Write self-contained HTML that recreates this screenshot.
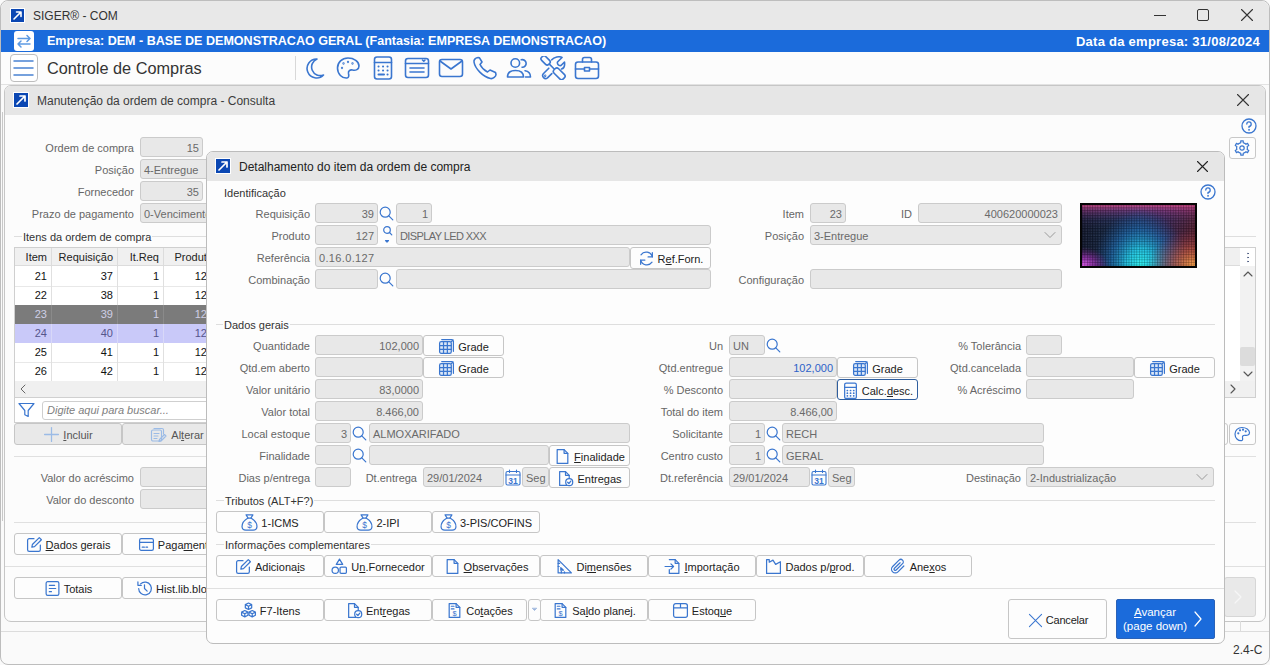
<!DOCTYPE html><html><head><meta charset="utf-8"><style>
*{box-sizing:border-box;margin:0;padding:0}
html,body{width:1270px;height:665px;overflow:hidden;background:#fafafa;font-family:"Liberation Sans",sans-serif}
body>div,body>svg{position:absolute}
.t{position:absolute;white-space:nowrap;font-size:11px;color:#333}
.lb{position:absolute;width:200px;height:20px;line-height:22px;text-align:right;font-size:11px;color:#666;white-space:nowrap}
.in{position:absolute;background:#e8e8e8;border:1px solid #cbcbcb;border-radius:3px;font-size:11px;color:#6a6a6a;white-space:nowrap;overflow:hidden}
.bt{position:absolute;background:#fdfdfd;border:1px solid #c6c6c6;border-radius:3px;font-size:11px;color:#222}
.bc{position:absolute;left:0;top:0;right:0;bottom:0;display:flex;align-items:center;justify-content:center;white-space:nowrap;padding-top:1px}
.gt{position:absolute;background:#fcfcfc;padding:0 1px;height:16px;line-height:16px;font-size:11px;color:#333;white-space:nowrap}
u{text-decoration:underline;text-underline-offset:1px}
</style></head><body>
<div style="left:0px;top:0px;width:1270px;height:665px;background:#fafafa;border:1px solid #bdbdbd;border-radius:8px"></div>
<div style="left:1px;top:1px;width:1268px;height:29px;background:#e8e8e8;border-radius:8px 8px 0 0"></div>
<div style="left:10px;top:8px;width:15px;height:15px;background:#fff"></div>
<div style="left:11px;top:9px;width:13px;height:13px;background:#0b47b3"></div>
<svg style="left:11px;top:9px;" width="13" height="13" viewBox="0 0 13 13" fill="none" stroke="#fff" stroke-width="1.6" stroke-linecap="round" stroke-linejoin="round"><path d="M3 10 L10 3 M5.5 3 H10 V7.5"/></svg>
<div class="t" style="left:33px;top:6px;height:20px;line-height:20px;text-align:left;font-size:12px;color:#333">SIGER® - COM</div>
<div style="left:1154px;top:15px;width:12px;height:1px;background:#333"></div>
<div style="left:1197px;top:9px;width:12px;height:12px;border:1px solid #333;border-radius:2px"></div>
<svg style="left:1241px;top:9px;" width="12" height="12" viewBox="0 0 12 12" fill="none" stroke="#333" stroke-width="1.1" stroke-linecap="round" stroke-linejoin="round"><path d="M0.5 0.5 L11.5 11.5 M11.5 0.5 L0.5 11.5"/></svg>
<div style="left:1px;top:30px;width:1268px;height:22px;background:#1b6bdb"></div>
<div style="left:14px;top:31px;width:20px;height:20px;background:#fff;border-radius:3px"></div>
<svg style="left:14px;top:31px;" width="20" height="20" viewBox="0 0 20 20" fill="none" stroke="#5d9ae3" stroke-width="1.5" stroke-linecap="round" stroke-linejoin="round"><path d="M4 7.5 H16 M13 4.5 L16 7.5 L13 10.5 M16 13 H4 M7 10 L4 13 L7 16"/></svg>
<div class="t" style="left:47px;top:30px;height:22px;line-height:22px;text-align:left;font-size:12.55px;font-weight:bold;color:#fff">Empresa: DEM - BASE DE DEMONSTRACAO GERAL (Fantasia: EMPRESA DEMONSTRACAO)</div>
<div class="t" style="left:1060px;top:30px;width:200px;height:23px;line-height:23px;text-align:right;font-size:13px;font-weight:bold;color:#fff;letter-spacing:.26px">Data da empresa: 31/08/2024</div>
<div style="left:1px;top:52px;width:1268px;height:32px;background:#fcfcfc"></div>
<div style="left:1px;top:84px;width:1268px;height:1px;background:#e2e2e2"></div>
<div style="left:10px;top:54px;width:28px;height:28px;border:1px solid #bdbdbd;border-radius:4px;background:#fff"></div>
<svg style="left:10px;top:54px;" width="28" height="28" viewBox="0 0 28 28" fill="none" stroke="#4a82d2" stroke-width="1.5" stroke-linecap="round" stroke-linejoin="round"><path d="M4 7 H23 M4 14 H23 M4 21 H23"/></svg>
<div class="t" style="left:47px;top:55px;height:26px;line-height:26px;text-align:left;font-size:16.3px;color:#333">Controle de Compras</div>
<div style="left:295px;top:56px;width:1px;height:24px;background:#d8d8d8"></div>
<svg style="left:304px;top:57px;" width="21" height="22" viewBox="0 0 21 22" fill="none" stroke="#3a76cf" stroke-width="1.6" stroke-linecap="round" stroke-linejoin="round"><path d="M13 2 A9.5 9.5 0 1 0 19.5 18 A8.5 8.5 0 0 1 13 2 Z"/></svg>
<svg style="left:336px;top:56px;" width="25" height="24" viewBox="0 0 25 24" fill="none" stroke="#3a76cf" stroke-width="1.6" stroke-linecap="round" stroke-linejoin="round"><path d="M12 2 C6 2 1.5 6.5 1.5 12 C1.5 18 6 22.5 11 22 C13 21.8 13 19.5 12.5 17.5 C12 15 14 13.5 16.5 14 C19.5 14.8 23 13.5 23 10 C23 5.5 18 2 12 2 Z"/><circle cx="6" cy="12" r=".35" fill="#3a76cf"/><circle cx="7.5" cy="7.5" r=".35" fill="#3a76cf"/><circle cx="12" cy="6" r=".35" fill="#3a76cf"/><circle cx="16.5" cy="7.5" r=".35" fill="#3a76cf"/></svg>
<svg style="left:373px;top:56px;" width="20" height="24" viewBox="0 0 20 24" fill="none" stroke="#3a76cf" stroke-width="1.6" stroke-linecap="round" stroke-linejoin="round"><rect x="1.5" y="1" width="17" height="22" rx="2.5"/><path d="M1.5 6.5 H18.5"/><path d="M5.5 10.5h.1M10 10.5h.1M14.5 10.5h.1M5.5 14.5h.1M10 14.5h.1M14.5 14.5h.1M5.5 18.5H11M14.5 18.5h.1" stroke-width="2"/></svg>
<svg style="left:404px;top:57px;" width="26" height="22" viewBox="0 0 26 22" fill="none" stroke="#3a76cf" stroke-width="1.6" stroke-linecap="round" stroke-linejoin="round"><rect x="1.5" y="1.5" width="23" height="19" rx="2.5"/><path d="M1.5 6.5 H24.5 M6 11 H20 M6 15 H20 M18.5 3 L19.8 4.2 L21 3"/></svg>
<svg style="left:438px;top:58px;" width="26" height="20" viewBox="0 0 26 20" fill="none" stroke="#3a76cf" stroke-width="1.6" stroke-linecap="round" stroke-linejoin="round"><rect x="1.5" y="1.5" width="23" height="17" rx="2.5"/><path d="M2 3 L13 11 L24 3"/></svg>
<svg style="left:472px;top:56px;" width="26" height="24" viewBox="0 0 26 24" fill="none" stroke="#3a76cf" stroke-width="1.6" stroke-linecap="round" stroke-linejoin="round"><path d="M6 1.5 C4 1.5 1.5 3.5 2 6 C3 12.5 11 21 18.5 22.5 C21 23 24 20.5 24 18.5 L23.5 16.5 L18 14 L15.5 16 C12.5 14.5 9.5 11.5 8 8.5 L10 6 L7.5 1.8 Z"/></svg>
<svg style="left:506px;top:57px;" width="26" height="22" viewBox="0 0 26 22" fill="none" stroke="#3a76cf" stroke-width="1.6" stroke-linecap="round" stroke-linejoin="round"><circle cx="9.3" cy="6" r="4.3"/><path d="M1.5 20 C1.5 15.5 5 13.5 9.5 13.5 C14 13.5 17.5 15.5 17.5 20 Z"/><path d="M15.2 2.8 A3.8 3.8 0 1 1 16 10.2"/><path d="M19 13.7 C22.5 14.2 24.5 16.5 24.5 20 H19.5"/></svg>
<svg style="left:540px;top:56px;" width="26" height="24" viewBox="0 0 26 24" fill="none" stroke="#3a76cf" stroke-width="1.6" stroke-linecap="round" stroke-linejoin="round"><rect x="-5" y="-2.8" width="10" height="5.6" rx="2.2" transform="translate(5.6 4.4) rotate(45)"/><path d="M9.6 8.4 L14.2 13"/><rect x="-6.5" y="-3.2" width="13" height="6.4" rx="2.5" transform="translate(19.2 17.8) rotate(45)"/><path d="M8.8 12.2 L3.3 17.7 A3 3 0 0 0 7.5 21.9 L11.8 17.6"/><path d="M11.8 3.8 C14 1 19.5 0 22 1.5 L17.5 6 C17 8 18.5 10 21 9.5 L24.5 6 C25 10 23.5 12.5 21.5 13"/><circle cx="5.2" cy="19.7" r=".4"/></svg>
<svg style="left:574px;top:56px;" width="26" height="24" viewBox="0 0 26 24" fill="none" stroke="#3a76cf" stroke-width="1.6" stroke-linecap="round" stroke-linejoin="round"><rect x="1.5" y="6" width="23" height="16.5" rx="2.5"/><path d="M8.5 6 V3.5 Q8.5 1.5 10.5 1.5 H15.5 Q17.5 1.5 17.5 3.5 V6 M1.5 13 H10.5 M15.5 13 H24.5 M10.5 11.5 H15.5 V15 H10.5 Z"/></svg>
<div style="left:4px;top:85px;width:1262px;height:537px;background:#fcfcfc;border:1px solid #c6c6c6;border-radius:7px"></div>
<div style="left:5px;top:86px;width:1260px;height:29px;background:#e6e6e6;border-radius:6px 6px 0 0"></div>
<div style="left:2px;top:112px;width:1px;height:409px;background:#c8c8c8"></div>
<div style="left:13px;top:92px;width:16px;height:16px;background:#fff"></div>
<div style="left:14px;top:93px;width:14px;height:14px;background:#0b47b3"></div>
<svg style="left:14px;top:93px;" width="14" height="14" viewBox="0 0 14 14" fill="none" stroke="#fff" stroke-width="1.7" stroke-linecap="round" stroke-linejoin="round"><path d="M3 11 L11 3 M6 3 H11 V8"/></svg>
<div class="t" style="left:37px;top:91px;height:20px;line-height:20px;text-align:left;font-size:12px;color:#3c3c3c">Manutenção da ordem de compra - Consulta</div>
<svg style="left:1237px;top:94px;" width="12" height="12" viewBox="0 0 12 12" fill="none" stroke="#333" stroke-width="1.1" stroke-linecap="round" stroke-linejoin="round"><path d="M0.5 0.5 L11.5 11.5 M11.5 0.5 L0.5 11.5"/></svg>
<div class="lb" style="left:-66px;top:137px;">Ordem de compra</div>
<div class="lb" style="left:-66px;top:159px;">Posição</div>
<div class="lb" style="left:-66px;top:181px;">Fornecedor</div>
<div class="lb" style="left:-66px;top:203px;">Prazo de pagamento</div>
<div class="in" style="left:140px;top:137px;width:63px;height:20px;line-height:20px;text-align:right;padding-right:3px;">15</div>
<div class="in" style="left:140px;top:159px;width:80px;height:20px;line-height:20px;text-align:left;padding-left:3px;">4-Entregue</div>
<div class="in" style="left:140px;top:181px;width:63px;height:20px;line-height:20px;text-align:right;padding-right:3px;">35</div>
<div class="in" style="left:140px;top:203px;width:80px;height:20px;line-height:20px;text-align:left;padding-left:3px;">0-Vencimento</div>
<div style="left:14px;top:236px;width:1242px;height:1px;background:#dedede"></div>
<div class="gt" style="left:22px;top:229px;background:#fcfcfc">Itens da ordem de compra</div>
<div style="left:14px;top:247px;width:1242px;height:151px;background:#fff;border:1px solid #cfcfcf"></div>
<div style="left:14px;top:397px;width:1000px;height:26px;background:#fff;border:1px solid #cfcfcf"></div>
<div style="left:15px;top:248px;width:1225px;height:18px;background:#f0f0f0;border-bottom:1px solid #dcdcdc"></div>
<div class="t" style="left:15px;top:248px;width:32px;height:18px;line-height:18px;text-align:right;font-size:11px;color:#222">Item</div>
<div style="left:51px;top:248px;width:1px;height:133px;background:#dcdcdc"></div>
<div class="t" style="left:51px;top:248px;width:62px;height:18px;line-height:18px;text-align:right;font-size:11px;color:#222">Requisição</div>
<div style="left:117px;top:248px;width:1px;height:133px;background:#dcdcdc"></div>
<div class="t" style="left:117px;top:248px;width:42px;height:18px;line-height:18px;text-align:right;font-size:11px;color:#222">It.Req</div>
<div style="left:163px;top:248px;width:1px;height:133px;background:#dcdcdc"></div>
<div class="t" style="left:163px;top:248px;width:50px;height:18px;line-height:18px;text-align:right;font-size:11px;color:#222">Produto</div>
<div style="left:217px;top:248px;width:1px;height:133px;background:#dcdcdc"></div>
<div style="left:15px;top:286px;width:202px;height:1px;background:#e8e8e8"></div>
<div class="t" style="left:15px;top:267px;width:32px;height:19px;line-height:19px;text-align:right;font-size:11px;color:#111">21</div>
<div class="t" style="left:51px;top:267px;width:62px;height:19px;line-height:19px;text-align:right;font-size:11px;color:#111">37</div>
<div class="t" style="left:117px;top:267px;width:42px;height:19px;line-height:19px;text-align:right;font-size:11px;color:#111">1</div>
<div class="t" style="left:163px;top:267px;width:50px;height:19px;line-height:19px;text-align:right;font-size:11px;color:#111">127</div>
<div style="left:51px;top:267px;width:1px;height:19px;background:#e0e0e0"></div>
<div style="left:117px;top:267px;width:1px;height:19px;background:#e0e0e0"></div>
<div style="left:163px;top:267px;width:1px;height:19px;background:#e0e0e0"></div>
<div style="left:217px;top:267px;width:1px;height:19px;background:#e0e0e0"></div>
<div style="left:15px;top:305px;width:202px;height:1px;background:#e8e8e8"></div>
<div class="t" style="left:15px;top:286px;width:32px;height:19px;line-height:19px;text-align:right;font-size:11px;color:#111">22</div>
<div class="t" style="left:51px;top:286px;width:62px;height:19px;line-height:19px;text-align:right;font-size:11px;color:#111">38</div>
<div class="t" style="left:117px;top:286px;width:42px;height:19px;line-height:19px;text-align:right;font-size:11px;color:#111">1</div>
<div class="t" style="left:163px;top:286px;width:50px;height:19px;line-height:19px;text-align:right;font-size:11px;color:#111">127</div>
<div style="left:51px;top:286px;width:1px;height:19px;background:#e0e0e0"></div>
<div style="left:117px;top:286px;width:1px;height:19px;background:#e0e0e0"></div>
<div style="left:163px;top:286px;width:1px;height:19px;background:#e0e0e0"></div>
<div style="left:217px;top:286px;width:1px;height:19px;background:#e0e0e0"></div>
<div style="left:15px;top:305px;width:202px;height:19px;background:#7b7b7b"></div>
<div class="t" style="left:15px;top:305px;width:32px;height:19px;line-height:19px;text-align:right;font-size:11px;color:#cfcfe6">23</div>
<div class="t" style="left:51px;top:305px;width:62px;height:19px;line-height:19px;text-align:right;font-size:11px;color:#cfcfe6">39</div>
<div class="t" style="left:117px;top:305px;width:42px;height:19px;line-height:19px;text-align:right;font-size:11px;color:#cfcfe6">1</div>
<div class="t" style="left:163px;top:305px;width:50px;height:19px;line-height:19px;text-align:right;font-size:11px;color:#cfcfe6">127</div>
<div style="left:51px;top:305px;width:1px;height:19px;background:#8a8a8a"></div>
<div style="left:117px;top:305px;width:1px;height:19px;background:#8a8a8a"></div>
<div style="left:163px;top:305px;width:1px;height:19px;background:#8a8a8a"></div>
<div style="left:217px;top:305px;width:1px;height:19px;background:#8a8a8a"></div>
<div style="left:15px;top:324px;width:202px;height:19px;background:#c9c9f9"></div>
<div class="t" style="left:15px;top:324px;width:32px;height:19px;line-height:19px;text-align:right;font-size:11px;color:#55558c">24</div>
<div class="t" style="left:51px;top:324px;width:62px;height:19px;line-height:19px;text-align:right;font-size:11px;color:#55558c">40</div>
<div class="t" style="left:117px;top:324px;width:42px;height:19px;line-height:19px;text-align:right;font-size:11px;color:#55558c">1</div>
<div class="t" style="left:163px;top:324px;width:50px;height:19px;line-height:19px;text-align:right;font-size:11px;color:#55558c">127</div>
<div style="left:51px;top:324px;width:1px;height:19px;background:#d8d8f8"></div>
<div style="left:117px;top:324px;width:1px;height:19px;background:#d8d8f8"></div>
<div style="left:163px;top:324px;width:1px;height:19px;background:#d8d8f8"></div>
<div style="left:217px;top:324px;width:1px;height:19px;background:#d8d8f8"></div>
<div style="left:15px;top:362px;width:202px;height:1px;background:#e8e8e8"></div>
<div class="t" style="left:15px;top:343px;width:32px;height:19px;line-height:19px;text-align:right;font-size:11px;color:#111">25</div>
<div class="t" style="left:51px;top:343px;width:62px;height:19px;line-height:19px;text-align:right;font-size:11px;color:#111">41</div>
<div class="t" style="left:117px;top:343px;width:42px;height:19px;line-height:19px;text-align:right;font-size:11px;color:#111">1</div>
<div class="t" style="left:163px;top:343px;width:50px;height:19px;line-height:19px;text-align:right;font-size:11px;color:#111">127</div>
<div style="left:51px;top:343px;width:1px;height:19px;background:#e0e0e0"></div>
<div style="left:117px;top:343px;width:1px;height:19px;background:#e0e0e0"></div>
<div style="left:163px;top:343px;width:1px;height:19px;background:#e0e0e0"></div>
<div style="left:217px;top:343px;width:1px;height:19px;background:#e0e0e0"></div>
<div style="left:15px;top:381px;width:202px;height:1px;background:#e8e8e8"></div>
<div class="t" style="left:15px;top:362px;width:32px;height:19px;line-height:19px;text-align:right;font-size:11px;color:#111">26</div>
<div class="t" style="left:51px;top:362px;width:62px;height:19px;line-height:19px;text-align:right;font-size:11px;color:#111">42</div>
<div class="t" style="left:117px;top:362px;width:42px;height:19px;line-height:19px;text-align:right;font-size:11px;color:#111">1</div>
<div class="t" style="left:163px;top:362px;width:50px;height:19px;line-height:19px;text-align:right;font-size:11px;color:#111">127</div>
<div style="left:51px;top:362px;width:1px;height:19px;background:#e0e0e0"></div>
<div style="left:117px;top:362px;width:1px;height:19px;background:#e0e0e0"></div>
<div style="left:163px;top:362px;width:1px;height:19px;background:#e0e0e0"></div>
<div style="left:217px;top:362px;width:1px;height:19px;background:#e0e0e0"></div>
<div style="left:15px;top:381px;width:1240px;height:16px;background:#f0f0f0"></div>
<svg style="left:19px;top:384px;" width="8" height="10" viewBox="0 0 8 10" fill="none" stroke="#666" stroke-width="1" stroke-linecap="round" stroke-linejoin="round"><path d="M6 1 L2 5 L6 9"/></svg>
<div style="left:15px;top:397px;width:1240px;height:1px;background:#d0d0d0"></div>
<svg style="left:18px;top:402px;" width="17" height="16" viewBox="0 0 17 16" fill="none" stroke="#3a76cf" stroke-width="1.2" stroke-linecap="round" stroke-linejoin="round"><path d="M1 1.5 H16 L10.2 8.5 V14.5 L6.8 12.8 V8.5 Z"/></svg>
<div style="left:42px;top:401px;width:1000px;height:19px;background:#fff;border:1px solid #cfcfcf;border-radius:3px"></div>
<div class="t" style="left:47px;top:400px;height:20px;line-height:20px;text-align:left;font-size:11px;font-style:italic;color:#808080">Digite aqui para buscar...</div>
<div class="bt" style="left:14px;top:423px;width:108px;height:22px;background:#e9e9e9"><div class="bc" style="color:#555;--ic:#9bbbe6"><svg width="17" height="17" viewBox="0 0 16 16" fill="none" stroke="#3a76cf" stroke-width="1.2" stroke-linecap="round" stroke-linejoin="round" style="position:static;margin-right:3px;flex:none"><path stroke="#9bbbe6" d="M8 1.5 V14.5 M1.5 8 H14.5"/></svg><span style="position:relative;top:0px"><u>I</u>ncluir</span></div></div>
<div style="left:14px;top:423px;width:107px;height:22px;opacity:.5"></div>
<div class="bt" style="left:122px;top:423px;width:108px;height:22px;background:#e9e9e9"><div class="bc" style="color:#555"><svg width="20" height="16" viewBox="0 0 16 16" fill="none" stroke="#3a76cf" stroke-width="1.15" stroke-linecap="round" stroke-linejoin="round" style="position:static;margin-right:3px;flex:none"><g stroke="#9bbbe6"><rect x="1.5" y="3" width="10" height="11" rx="1.5"/><path d="M4 1.5 H12 A1.5 1.5 0 0 1 13.5 3 V7 M4 6.5 H9 M4 9 H8 M4 11.5 H7"/><path d="M14.5 7.5 L16 9 L11 14 L9 14.5 L9.5 12.5 Z"/></g></svg><span style="position:relative;top:0px">Al<u>t</u>erar</span></div></div>
<div style="left:14px;top:456px;width:1242px;height:1px;background:#e0e0e0"></div>
<div class="lb" style="left:-66px;top:467px;">Valor do acréscimo</div>
<div class="in" style="left:140px;top:467px;width:80px;height:20px;line-height:20px;text-align:right;padding-right:3px;"></div>
<div class="lb" style="left:-66px;top:489px;">Valor do desconto</div>
<div class="in" style="left:140px;top:489px;width:80px;height:20px;line-height:20px;text-align:right;padding-right:3px;"></div>
<div style="left:14px;top:522px;width:1242px;height:1px;background:#e0e0e0"></div>
<div class="bt" style="left:14px;top:533px;width:108px;height:22px;"><div class="bc" style=""><svg width="17" height="17" viewBox="0 0 16 16" fill="none" stroke="#3a76cf" stroke-width="1.15" stroke-linecap="round" stroke-linejoin="round" style="position:static;margin-right:3px;flex:none"><path d="M7.5 2.5 H3 A1.5 1.5 0 0 0 1.5 4 V13 A1.5 1.5 0 0 0 3 14.5 H12 A1.5 1.5 0 0 0 13.5 13 V8.5"/><path d="M12.5 1.5 L14.5 3.5 L8 10 L5.5 10.5 L6 8 Z"/></svg><span style="position:relative;top:0px"><u>D</u>ados gerais</span></div></div>
<div class="bt" style="left:122px;top:533px;width:108px;height:22px;"><div class="bc" style=""><svg width="17" height="17" viewBox="0 0 16 16" fill="none" stroke="#3a76cf" stroke-width="1.15" stroke-linecap="round" stroke-linejoin="round" style="position:static;margin-right:3px;flex:none"><rect x="1.5" y="2.5" width="13" height="11" rx="1.5"/><path d="M1.5 6 H14.5 M4 10.5 H6 M7.5 10.5 H9"/></svg><span style="position:relative;top:0px">Paga<u>m</u>ento</span></div></div>
<div style="left:5px;top:566px;width:1260px;height:1px;background:#e0e0e0"></div>
<div class="bt" style="left:14px;top:577px;width:108px;height:22px;"><div class="bc" style=""><svg width="17" height="17" viewBox="0 0 16 16" fill="none" stroke="#3a76cf" stroke-width="1.15" stroke-linecap="round" stroke-linejoin="round" style="position:static;margin-right:3px;flex:none"><rect x="2" y="1.5" width="12" height="13" rx="1.5"/><path d="M5 5 H10 M5 8 H11 M5 11 H7"/></svg><span style="position:relative;top:0px">Totais</span></div></div>
<div class="bt" style="left:122px;top:577px;width:108px;height:22px;"><div class="bc" style=""><svg width="17" height="17" viewBox="0 0 16 16" fill="none" stroke="#3a76cf" stroke-width="1.15" stroke-linecap="round" stroke-linejoin="round" style="position:static;margin-right:3px;flex:none"><path d="M2.5 8 A6 6 0 1 0 4.3 3.7"/><path d="M1.8 1.8 V5 H5"/><path d="M8 4.5 V8 L10.5 10.5"/></svg><span style="position:relative;top:0px">Hist.lib.bloq.</span></div></div>
<svg style="left:1241px;top:118px;" width="16" height="16" viewBox="0 0 16 16" fill="none" stroke="#3a76cf" stroke-width="1.3" stroke-linecap="round" stroke-linejoin="round"><circle cx="8" cy="8" r="7"/><path d="M5.8 6 A2.2 2.2 0 1 1 8 8.3 V9.5"/><path d="M8 11.8 h.1" stroke-width="1.8"/></svg>
<div style="left:1229px;top:137px;width:27px;height:22px;background:#fdfdfd;border:1px solid #c8c8c8;border-radius:3px"></div>
<svg style="left:1234px;top:140px;" width="16" height="16" viewBox="0 0 16 16" fill="none" stroke="#3a76cf" stroke-width="1.2" stroke-linecap="round" stroke-linejoin="round"><path d="M5.30 3.32 L6.79 2.74 L6.75 0.91 L9.25 0.91 L9.21 2.74 L10.70 3.32 L11.95 4.32 L13.52 3.37 L14.77 5.54 L13.16 6.42 L13.40 8.00 L13.16 9.58 L14.77 10.46 L13.52 12.63 L11.95 11.68 L10.70 12.68 L9.21 13.26 L9.25 15.09 L6.75 15.09 L6.79 13.26 L5.30 12.68 L4.05 11.68 L2.48 12.63 L1.23 10.46 L2.84 9.58 L2.60 8.00 L2.84 6.42 L1.23 5.54 L2.48 3.37 L4.05 4.32 Z"/><circle cx="8" cy="8" r="2.2"/></svg>
<div style="left:1240px;top:248px;width:15px;height:18px;background:#fff"></div>
<svg style="left:1246px;top:251px;" width="4" height="13" viewBox="0 0 4 13" fill="none" stroke="#4a5a80" stroke-width="1" stroke-linecap="round" stroke-linejoin="round"><circle cx="2" cy="2.5" r=".4"/><circle cx="2" cy="6.5" r=".4"/><circle cx="2" cy="10.5" r=".4"/></svg>
<div style="left:1240px;top:266px;width:15px;height:115px;background:#f2f2f2"></div>
<svg style="left:1243px;top:270px;" width="10" height="7" viewBox="0 0 10 7" fill="none" stroke="#555" stroke-width="1.1" stroke-linecap="round" stroke-linejoin="round"><path d="M1 6 L5 2 L9 6"/></svg>
<div style="left:1240px;top:347px;width:15px;height:19px;background:#dcdcdc;border-radius:2px"></div>
<svg style="left:1243px;top:371px;" width="10" height="7" viewBox="0 0 10 7" fill="none" stroke="#555" stroke-width="1.1" stroke-linecap="round" stroke-linejoin="round"><path d="M1 1 L5 5 L9 1"/></svg>
<svg style="left:1229px;top:384px;" width="8" height="10" viewBox="0 0 8 10" fill="none" stroke="#555" stroke-width="1.1" stroke-linecap="round" stroke-linejoin="round"><path d="M2 1 L6 5 L2 9"/></svg>
<div style="left:1180px;top:423px;width:48px;height:22px;background:#fdfdfd;border:1px solid #c8c8c8;border-radius:3px"></div>
<div style="left:1229px;top:423px;width:27px;height:22px;background:#fdfdfd;border:1px solid #c8c8c8;border-radius:3px"></div>
<svg style="left:1234px;top:426px;" width="17" height="16" viewBox="0 0 17 16" fill="none" stroke="#3a76cf" stroke-width="1.2" stroke-linecap="round" stroke-linejoin="round"><path d="M8 1.5 C4 1.5 1 4.5 1 8 C1 12 4 15 7.5 14.7 C8.8 14.5 8.8 13 8.5 11.7 C8.2 10 9.5 9 11 9.3 C13 9.8 15.5 9 15.5 6.7 C15.5 3.7 12 1.5 8 1.5 Z"/><circle cx="4.3" cy="7.3" r=".5"/><circle cx="6" cy="4.3" r=".5"/><circle cx="9" cy="3.7" r=".5"/><circle cx="11.7" cy="5.3" r=".5"/></svg>
<div style="left:1224px;top:577px;width:32px;height:40px;background:#e9e9e9;border:1px solid #d6d6d6;border-radius:3px"></div>
<svg style="left:1233px;top:590px;" width="10" height="14" viewBox="0 0 10 14" fill="none" stroke="#f6f6f6" stroke-width="1.2" stroke-linecap="round" stroke-linejoin="round"><path d="M2 1 L8 7 L2 13"/></svg>
<div style="left:1px;top:631px;width:1268px;height:1px;background:#dcdcdc"></div>
<div style="left:1240px;top:621px;width:1px;height:10px;background:#dcdcdc"></div>
<div class="t" style="left:1233px;top:640px;height:20px;line-height:20px;text-align:left;font-size:12px;color:#333">2.4-C</div>
<div style="left:206px;top:151px;width:1019px;height:493px;background:#fdfdfd;border:1px solid #bcbcbc;border-radius:7px"></div>
<div style="left:207px;top:152px;width:1017px;height:29px;background:#e6e6e6;border-radius:6px 6px 0 0"></div>
<div style="left:215px;top:158px;width:16px;height:16px;background:#fff"></div>
<div style="left:216px;top:159px;width:14px;height:14px;background:#0b47b3"></div>
<svg style="left:216px;top:159px;" width="14" height="14" viewBox="0 0 14 14" fill="none" stroke="#fff" stroke-width="1.7" stroke-linecap="round" stroke-linejoin="round"><path d="M3 11 L11 3 M6 3 H11 V8"/></svg>
<div class="t" style="left:239px;top:157px;height:20px;line-height:20px;text-align:left;font-size:12px;color:#222">Detalhamento do item da ordem de compra</div>
<svg style="left:1197px;top:161px;" width="11" height="11" viewBox="0 0 11 11" fill="none" stroke="#222" stroke-width="1.1" stroke-linecap="round" stroke-linejoin="round"><path d="M0.5 0.5 L10.5 10.5 M10.5 0.5 L0.5 10.5"/></svg>
<svg style="left:1200px;top:184px;" width="16" height="16" viewBox="0 0 16 16" fill="none" stroke="#3a76cf" stroke-width="1.3" stroke-linecap="round" stroke-linejoin="round"><circle cx="8" cy="8" r="7"/><path d="M5.8 6 A2.2 2.2 0 1 1 8 8.3 V9.5"/><path d="M8 11.8 h.1" stroke-width="1.8"/></svg>
<div class="t" style="left:224px;top:183px;height:20px;line-height:20px;text-align:left;font-size:11px;color:#333">Identificação</div>
<div class="lb" style="left:110px;top:203px;">Requisição</div>
<div class="in" style="left:315px;top:203px;width:63px;height:20px;line-height:20px;text-align:right;padding-right:3px;">39</div>
<svg style="left:379px;top:206px;" width="15" height="15" viewBox="0 0 15 15" fill="none" stroke="#3a76cf" stroke-width="1.2" stroke-linecap="round" stroke-linejoin="round"><circle cx="6.2" cy="6.2" r="5"/><path d="M9.8 9.8 L13.8 13.8"/></svg>
<div class="in" style="left:396px;top:203px;width:36px;height:20px;line-height:20px;text-align:right;padding-right:3px;">1</div>
<div class="lb" style="left:110px;top:225px;">Produto</div>
<div class="in" style="left:315px;top:225px;width:63px;height:20px;line-height:20px;text-align:right;padding-right:3px;">127</div>
<svg style="left:382px;top:225px;" width="11" height="20" viewBox="0 0 11 20" fill="none" stroke="#3a76cf" stroke-width="1.2" stroke-linecap="round" stroke-linejoin="round"><circle cx="5" cy="5" r="3.3"/><path d="M7.5 7.5 L9.8 9.8"/><path d="M3.5 15.5 L5 17 L6.5 15.5 Z" fill="#3a76cf"/></svg>
<div class="in" style="left:396px;top:225px;width:315px;height:20px;line-height:20px;text-align:left;padding-left:3px;letter-spacing:-.6px">DISPLAY LED XXX</div>
<div class="lb" style="left:110px;top:247px;">Referência</div>
<div class="in" style="left:315px;top:247px;width:315px;height:20px;line-height:20px;text-align:left;padding-left:3px;letter-spacing:.35px">0.16.0.127</div>
<div class="bt" style="left:630px;top:247px;width:81px;height:22px;"><div class="bc" style=""><svg width="17" height="17" viewBox="0 0 16 16" fill="none" stroke="#3a76cf" stroke-width="1.15" stroke-linecap="round" stroke-linejoin="round" style="position:static;margin-right:3px;flex:none"><path d="M13.5 6.5 A6 6 0 0 0 2.8 4.5 M2.5 9.5 A6 6 0 0 0 13.2 11.5"/><path d="M13.5 2.5 V6.5 H9.5 M2.5 13.5 V9.5 H6.5"/></svg><span style="position:relative;top:0px">R<u>e</u>f.Forn.</span></div></div>
<div class="lb" style="left:110px;top:269px;">Combinação</div>
<div class="in" style="left:315px;top:269px;width:63px;height:20px;line-height:20px;text-align:right;padding-right:3px;"></div>
<svg style="left:379px;top:272px;" width="15" height="15" viewBox="0 0 15 15" fill="none" stroke="#3a76cf" stroke-width="1.2" stroke-linecap="round" stroke-linejoin="round"><circle cx="6.2" cy="6.2" r="5"/><path d="M9.8 9.8 L13.8 13.8"/></svg>
<div class="in" style="left:396px;top:269px;width:315px;height:20px;line-height:20px;text-align:right;padding-right:3px;"></div>
<div class="lb" style="left:604px;top:203px;">Item</div>
<div class="in" style="left:810px;top:203px;width:36px;height:20px;line-height:20px;text-align:right;padding-right:3px;">23</div>
<div class="lb" style="left:712px;top:203px;">ID</div>
<div class="in" style="left:918px;top:203px;width:144px;height:20px;line-height:20px;text-align:right;padding-right:3px;">400620000023</div>
<div class="lb" style="left:604px;top:225px;">Posição</div>
<div class="in" style="left:810px;top:225px;width:252px;height:20px;line-height:20px;text-align:left;padding-left:3px;">3-Entregue</div>
<svg style="left:1044px;top:230px;" width="12" height="10" viewBox="0 0 12 10" fill="none" stroke="#999" stroke-width="1" stroke-linecap="round" stroke-linejoin="round"><path d="M1 2.5 L6 7.5 L11 2.5"/></svg>
<div class="lb" style="left:604px;top:269px;">Configuração</div>
<div class="in" style="left:810px;top:269px;width:252px;height:20px;line-height:20px;text-align:right;padding-right:3px;"></div>
<svg style="left:1080px;top:203px" width="117" height="65" viewBox="0 0 117 65">
<defs>
<linearGradient id="h1" x1="0" y1="0" x2="1" y2="0"><stop offset="0" stop-color="#141a30"/><stop offset=".25" stop-color="#162a48"/><stop offset=".5" stop-color="#1d3a68"/><stop offset=".72" stop-color="#3a2a5a"/><stop offset="1" stop-color="#5a2030"/></linearGradient>
<linearGradient id="v1" x1="0" y1="0" x2="0" y2="1"><stop offset="0" stop-color="#e04a90" stop-opacity=".85"/><stop offset=".08" stop-color="#b03a90" stop-opacity=".55"/><stop offset=".25" stop-color="#50307a" stop-opacity=".2"/><stop offset=".5" stop-color="#000" stop-opacity="0"/></linearGradient>
<radialGradient id="c1" cx=".52" cy="1" r=".42" gradientTransform="translate(0.52 1) scale(1 2.2) translate(-0.52 -1)"><stop offset="0" stop-color="#2af4f4"/><stop offset=".3" stop-color="#1ec0e0"/><stop offset=".65" stop-color="#1a70b8" stop-opacity=".65"/><stop offset="1" stop-color="#1a4a90" stop-opacity="0"/></radialGradient>
<radialGradient id="o1" cx="1" cy="1" r=".42" gradientTransform="translate(1 1) scale(1 1.4) translate(-1 -1)"><stop offset="0" stop-color="#ffa848"/><stop offset=".45" stop-color="#d86040" stop-opacity=".65"/><stop offset="1" stop-color="#a03040" stop-opacity="0"/></radialGradient>
<radialGradient id="m1" cx="0" cy="1" r=".24" gradientTransform="translate(0 1) scale(1 1.3) translate(0 -1)"><stop offset="0" stop-color="#f060ff"/><stop offset=".5" stop-color="#b030c8" stop-opacity=".65"/><stop offset="1" stop-color="#802090" stop-opacity="0"/></radialGradient>
<pattern id="grid" width="2.6" height="2.6" patternUnits="userSpaceOnUse"><rect x="1.7" width=".9" height="2.6" fill="#000" fill-opacity=".22"/><rect y="1.7" width="2.6" height=".9" fill="#000" fill-opacity=".22"/><rect x=".6" y=".6" width=".9" height=".9" fill="#fff" fill-opacity=".18"/></pattern>
</defs>
<rect width="117" height="65" fill="#050505"/>
<rect x="2" y="2" width="113" height="61" fill="url(#h1)"/>
<rect x="2" y="2" width="113" height="61" fill="url(#v1)"/>
<rect x="2" y="2" width="113" height="61" fill="url(#c1)"/>
<rect x="2" y="2" width="113" height="61" fill="url(#o1)"/>
<rect x="2" y="2" width="113" height="61" fill="url(#m1)"/>
<rect x="2" y="2" width="113" height="61" fill="url(#grid)"/>
</svg>
<div style="left:216px;top:324px;width:999px;height:1px;background:#dedede"></div>
<div class="gt" style="left:223px;top:317px;background:#fdfdfd">Dados gerais</div>
<div class="lb" style="left:110px;top:335px;">Quantidade</div>
<div class="in" style="left:315px;top:335px;width:108px;height:20px;line-height:20px;text-align:right;padding-right:3px;">102,000</div>
<div class="bt" style="left:423px;top:335px;width:81px;height:21px;"><div class="bc" style=""><svg width="17" height="17" viewBox="0 0 16 16" fill="none" stroke="#3a76cf" stroke-width="1.15" stroke-linecap="round" stroke-linejoin="round" style="position:static;margin-right:3px;flex:none"><rect x="1.5" y="3.5" width="11" height="11" rx="1.5" fill="#dbe7f7"/><path d="M1.5 7.2 H12.5 M1.5 10.8 H12.5 M5.2 3.5 V14.5 M8.8 3.5 V14.5"/><path d="M3.5 1.5 H13 A1.5 1.5 0 0 1 14.5 3 V12.5 M12.5 3.5 L14.2 1.8"/></svg><span style="position:relative;top:1px">Grade</span></div></div>
<div class="lb" style="left:110px;top:357px;">Qtd.em aberto</div>
<div class="in" style="left:315px;top:357px;width:108px;height:20px;line-height:20px;text-align:right;padding-right:3px;"></div>
<div class="bt" style="left:423px;top:357px;width:81px;height:21px;"><div class="bc" style=""><svg width="17" height="17" viewBox="0 0 16 16" fill="none" stroke="#3a76cf" stroke-width="1.15" stroke-linecap="round" stroke-linejoin="round" style="position:static;margin-right:3px;flex:none"><rect x="1.5" y="3.5" width="11" height="11" rx="1.5" fill="#dbe7f7"/><path d="M1.5 7.2 H12.5 M1.5 10.8 H12.5 M5.2 3.5 V14.5 M8.8 3.5 V14.5"/><path d="M3.5 1.5 H13 A1.5 1.5 0 0 1 14.5 3 V12.5 M12.5 3.5 L14.2 1.8"/></svg><span style="position:relative;top:1px">Grade</span></div></div>
<div class="lb" style="left:110px;top:379px;">Valor unitário</div>
<div class="in" style="left:315px;top:379px;width:108px;height:20px;line-height:20px;text-align:right;padding-right:3px;">83,0000</div>
<div class="lb" style="left:110px;top:401px;">Valor total</div>
<div class="in" style="left:315px;top:401px;width:108px;height:20px;line-height:20px;text-align:right;padding-right:3px;">8.466,00</div>
<div class="lb" style="left:110px;top:423px;">Local estoque</div>
<div class="in" style="left:315px;top:423px;width:36px;height:20px;line-height:20px;text-align:right;padding-right:3px;">3</div>
<svg style="left:352px;top:426px;" width="15" height="15" viewBox="0 0 15 15" fill="none" stroke="#3a76cf" stroke-width="1.2" stroke-linecap="round" stroke-linejoin="round"><circle cx="6.2" cy="6.2" r="5"/><path d="M9.8 9.8 L13.8 13.8"/></svg>
<div class="in" style="left:369px;top:423px;width:261px;height:20px;line-height:20px;text-align:left;padding-left:3px;">ALMOXARIFADO</div>
<div class="lb" style="left:110px;top:445px;">Finalidade</div>
<div class="in" style="left:315px;top:445px;width:36px;height:20px;line-height:20px;text-align:right;padding-right:3px;"></div>
<svg style="left:352px;top:448px;" width="15" height="15" viewBox="0 0 15 15" fill="none" stroke="#3a76cf" stroke-width="1.2" stroke-linecap="round" stroke-linejoin="round"><circle cx="6.2" cy="6.2" r="5"/><path d="M9.8 9.8 L13.8 13.8"/></svg>
<div class="in" style="left:369px;top:445px;width:180px;height:20px;line-height:20px;text-align:right;padding-right:3px;"></div>
<div class="bt" style="left:549px;top:445px;width:81px;height:21px;"><div class="bc" style=""><svg width="17" height="17" viewBox="0 0 16 16" fill="none" stroke="#3a76cf" stroke-width="1.15" stroke-linecap="round" stroke-linejoin="round" style="position:static;margin-right:3px;flex:none"><path d="M3 1.5 H9.5 L13 5 V14.5 H3 Z"/><path d="M9.5 1.5 V5 H13"/></svg><span style="position:relative;top:1px"><u>F</u>inalidade</span></div></div>
<div class="lb" style="left:110px;top:467px;">Dias p/entrega</div>
<div class="in" style="left:315px;top:467px;width:36px;height:20px;line-height:20px;text-align:right;padding-right:3px;"></div>
<div class="lb" style="left:217px;top:467px;">Dt.entrega</div>
<div class="in" style="left:423px;top:467px;width:81px;height:20px;line-height:20px;text-align:left;padding-left:3px;">29/01/2024</div>
<svg style="left:505px;top:469px;" width="16" height="17" viewBox="0 0 16 17" fill="none" stroke="#3a76cf" stroke-width="1.1" stroke-linecap="round" stroke-linejoin="round"><rect x="1" y="2.5" width="14" height="13.5" rx="1.5"/><path d="M1 6 H15 M4.5 1 V3.5 M11.5 1 V3.5"/><text x="8" y="14.6" font-size="8.5" font-family="Liberation Sans" text-anchor="middle" fill="#3a76cf" stroke="none" font-weight="bold">31</text></svg>
<div class="in" style="left:522px;top:467px;width:27px;height:20px;line-height:20px;text-align:left;padding-left:3px;">Seg</div>
<div class="bt" style="left:549px;top:467px;width:81px;height:21px;"><div class="bc" style=""><svg width="17" height="17" viewBox="0 0 16 16" fill="none" stroke="#3a76cf" stroke-width="1.15" stroke-linecap="round" stroke-linejoin="round" style="position:static;margin-right:3px;flex:none"><path d="M9 14.5 H2.5 V1.5 H8 L11.5 5 V8"/><path d="M8 1.5 V5 H11.5"/><circle cx="11.5" cy="11.5" r="3.3"/><path d="M10 11.5 L11.2 12.7 L13 10.5"/></svg><span style="position:relative;top:1px">Entre<u>g</u>as</span></div></div>
<div class="lb" style="left:523px;top:335px;">Un</div>
<div class="in" style="left:729px;top:335px;width:36px;height:20px;line-height:20px;text-align:left;padding-left:3px;">UN</div>
<svg style="left:766px;top:338px;" width="15" height="15" viewBox="0 0 15 15" fill="none" stroke="#3a76cf" stroke-width="1.2" stroke-linecap="round" stroke-linejoin="round"><circle cx="6.2" cy="6.2" r="5"/><path d="M9.8 9.8 L13.8 13.8"/></svg>
<div class="lb" style="left:523px;top:357px;">Qtd.entregue</div>
<div class="in" style="left:729px;top:357px;width:108px;height:20px;line-height:20px;text-align:right;padding-right:3px;color:#2d62c8">102,000</div>
<div class="bt" style="left:837px;top:357px;width:81px;height:21px;"><div class="bc" style=""><svg width="17" height="17" viewBox="0 0 16 16" fill="none" stroke="#3a76cf" stroke-width="1.15" stroke-linecap="round" stroke-linejoin="round" style="position:static;margin-right:3px;flex:none"><rect x="1.5" y="3.5" width="11" height="11" rx="1.5" fill="#dbe7f7"/><path d="M1.5 7.2 H12.5 M1.5 10.8 H12.5 M5.2 3.5 V14.5 M8.8 3.5 V14.5"/><path d="M3.5 1.5 H13 A1.5 1.5 0 0 1 14.5 3 V12.5 M12.5 3.5 L14.2 1.8"/></svg><span style="position:relative;top:1px">Grade</span></div></div>
<div class="lb" style="left:523px;top:379px;">% Desconto</div>
<div class="in" style="left:729px;top:379px;width:108px;height:20px;line-height:20px;text-align:right;padding-right:3px;"></div>
<div class="bt" style="left:837px;top:379px;width:81px;height:21px;border:1px solid #2f5e9e"><div class="bc" style=""><svg width="17" height="17" viewBox="0 0 16 16" fill="none" stroke="#3a76cf" stroke-width="1.15" stroke-linecap="round" stroke-linejoin="round" style="position:static;margin-right:3px;flex:none"><rect x="2.5" y="1" width="11" height="14.5" rx="1.5"/><path d="M2.5 5 H13.5"/><path d="M5 8 h.1 M8 8 h.1 M11 8 h.1 M5 10.5 h.1 M8 10.5 h.1 M11 10.5 h.1 M5 13 h.1 M8 13 h.1 M11 13 h.1" stroke-width="1.6"/></svg><span style="position:relative;top:1px">Calc.<u>d</u>esc.</span></div></div>
<div class="lb" style="left:523px;top:401px;">Total do item</div>
<div class="in" style="left:729px;top:401px;width:108px;height:20px;line-height:20px;text-align:right;padding-right:3px;">8.466,00</div>
<div class="lb" style="left:523px;top:423px;">Solicitante</div>
<div class="in" style="left:729px;top:423px;width:36px;height:20px;line-height:20px;text-align:right;padding-right:3px;">1</div>
<svg style="left:766px;top:426px;" width="15" height="15" viewBox="0 0 15 15" fill="none" stroke="#3a76cf" stroke-width="1.2" stroke-linecap="round" stroke-linejoin="round"><circle cx="6.2" cy="6.2" r="5"/><path d="M9.8 9.8 L13.8 13.8"/></svg>
<div class="in" style="left:782px;top:423px;width:262px;height:20px;line-height:20px;text-align:left;padding-left:3px;">RECH</div>
<div class="lb" style="left:523px;top:445px;">Centro custo</div>
<div class="in" style="left:729px;top:445px;width:36px;height:20px;line-height:20px;text-align:right;padding-right:3px;">1</div>
<svg style="left:766px;top:448px;" width="15" height="15" viewBox="0 0 15 15" fill="none" stroke="#3a76cf" stroke-width="1.2" stroke-linecap="round" stroke-linejoin="round"><circle cx="6.2" cy="6.2" r="5"/><path d="M9.8 9.8 L13.8 13.8"/></svg>
<div class="in" style="left:782px;top:445px;width:262px;height:20px;line-height:20px;text-align:left;padding-left:3px;">GERAL</div>
<div class="lb" style="left:523px;top:467px;">Dt.referência</div>
<div class="in" style="left:729px;top:467px;width:81px;height:20px;line-height:20px;text-align:left;padding-left:3px;">29/01/2024</div>
<svg style="left:811px;top:469px;" width="16" height="17" viewBox="0 0 16 17" fill="none" stroke="#3a76cf" stroke-width="1.1" stroke-linecap="round" stroke-linejoin="round"><rect x="1" y="2.5" width="14" height="13.5" rx="1.5"/><path d="M1 6 H15 M4.5 1 V3.5 M11.5 1 V3.5"/><text x="8" y="14.6" font-size="8.5" font-family="Liberation Sans" text-anchor="middle" fill="#3a76cf" stroke="none" font-weight="bold">31</text></svg>
<div class="in" style="left:828px;top:467px;width:27px;height:20px;line-height:20px;text-align:left;padding-left:3px;">Seg</div>
<div class="lb" style="left:821px;top:335px;">% Tolerância</div>
<div class="in" style="left:1026px;top:335px;width:36px;height:20px;line-height:20px;text-align:right;padding-right:3px;"></div>
<div class="lb" style="left:821px;top:357px;">Qtd.cancelada</div>
<div class="in" style="left:1026px;top:357px;width:108px;height:20px;line-height:20px;text-align:right;padding-right:3px;"></div>
<div class="bt" style="left:1134px;top:357px;width:81px;height:21px;"><div class="bc" style=""><svg width="17" height="17" viewBox="0 0 16 16" fill="none" stroke="#3a76cf" stroke-width="1.15" stroke-linecap="round" stroke-linejoin="round" style="position:static;margin-right:3px;flex:none"><rect x="1.5" y="3.5" width="11" height="11" rx="1.5" fill="#dbe7f7"/><path d="M1.5 7.2 H12.5 M1.5 10.8 H12.5 M5.2 3.5 V14.5 M8.8 3.5 V14.5"/><path d="M3.5 1.5 H13 A1.5 1.5 0 0 1 14.5 3 V12.5 M12.5 3.5 L14.2 1.8"/></svg><span style="position:relative;top:1px">Grade</span></div></div>
<div class="lb" style="left:821px;top:379px;">% Acréscimo</div>
<div class="in" style="left:1026px;top:379px;width:108px;height:20px;line-height:20px;text-align:right;padding-right:3px;"></div>
<div class="lb" style="left:821px;top:467px;">Destinação</div>
<div class="in" style="left:1026px;top:467px;width:188px;height:20px;line-height:20px;text-align:left;padding-left:3px;">2-Industrialização</div>
<svg style="left:1196px;top:472px;" width="12" height="10" viewBox="0 0 12 10" fill="none" stroke="#999" stroke-width="1" stroke-linecap="round" stroke-linejoin="round"><path d="M1 2.5 L6 7.5 L11 2.5"/></svg>
<div style="left:216px;top:500px;width:999px;height:1px;background:#dedede"></div>
<div class="gt" style="left:224px;top:493px;background:#fdfdfd">Tributos (ALT+F?)</div>
<div class="bt" style="left:216px;top:511px;width:108px;height:22px;"><div class="bc" style=""><svg width="17" height="17" viewBox="0 0 16 16" fill="none" stroke="#3a76cf" stroke-width="1.15" stroke-linecap="round" stroke-linejoin="round" style="position:static;margin-right:3px;flex:none"><path d="M4.8 0.8 H11.2 L9.4 3.8 H6.6 Z"/><path d="M6.6 3.8 C2.8 6 0.8 9.5 1 12.3 C1.2 14.5 2.8 15.2 4.5 15.2 H11.5 C13.2 15.2 14.8 14.5 15 12.3 C15.2 9.5 13.2 6 9.4 3.8"/><text x="8" y="13" font-size="8" font-family="Liberation Sans" text-anchor="middle" fill="#3a76cf" stroke="none">$</text></svg><span style="position:relative;top:0px">1-ICMS</span></div></div>
<div class="bt" style="left:324px;top:511px;width:108px;height:22px;"><div class="bc" style=""><svg width="17" height="17" viewBox="0 0 16 16" fill="none" stroke="#3a76cf" stroke-width="1.15" stroke-linecap="round" stroke-linejoin="round" style="position:static;margin-right:3px;flex:none"><path d="M4.8 0.8 H11.2 L9.4 3.8 H6.6 Z"/><path d="M6.6 3.8 C2.8 6 0.8 9.5 1 12.3 C1.2 14.5 2.8 15.2 4.5 15.2 H11.5 C13.2 15.2 14.8 14.5 15 12.3 C15.2 9.5 13.2 6 9.4 3.8"/><text x="8" y="13" font-size="8" font-family="Liberation Sans" text-anchor="middle" fill="#3a76cf" stroke="none">$</text></svg><span style="position:relative;top:0px">2-IPI</span></div></div>
<div class="bt" style="left:432px;top:511px;width:108px;height:22px;"><div class="bc" style=""><svg width="17" height="17" viewBox="0 0 16 16" fill="none" stroke="#3a76cf" stroke-width="1.15" stroke-linecap="round" stroke-linejoin="round" style="position:static;margin-right:3px;flex:none"><path d="M4.8 0.8 H11.2 L9.4 3.8 H6.6 Z"/><path d="M6.6 3.8 C2.8 6 0.8 9.5 1 12.3 C1.2 14.5 2.8 15.2 4.5 15.2 H11.5 C13.2 15.2 14.8 14.5 15 12.3 C15.2 9.5 13.2 6 9.4 3.8"/><text x="8" y="13" font-size="8" font-family="Liberation Sans" text-anchor="middle" fill="#3a76cf" stroke="none">$</text></svg><span style="position:relative;top:0px">3-PIS/COFINS</span></div></div>
<div style="left:216px;top:544px;width:999px;height:1px;background:#dedede"></div>
<div class="gt" style="left:224px;top:537px;background:#fdfdfd">Informações complementares</div>
<div class="bt" style="left:216px;top:555px;width:108px;height:22px;"><div class="bc" style=""><svg width="17" height="17" viewBox="0 0 16 16" fill="none" stroke="#3a76cf" stroke-width="1.15" stroke-linecap="round" stroke-linejoin="round" style="position:static;margin-right:3px;flex:none"><path d="M7.5 2.5 H3 A1.5 1.5 0 0 0 1.5 4 V13 A1.5 1.5 0 0 0 3 14.5 H12 A1.5 1.5 0 0 0 13.5 13 V8.5"/><path d="M12.5 1.5 L14.5 3.5 L8 10 L5.5 10.5 L6 8 Z"/></svg><span style="position:relative;top:0px">Adiciona<u>i</u>s</span></div></div>
<div class="bt" style="left:324px;top:555px;width:108px;height:22px;"><div class="bc" style=""><svg width="17" height="17" viewBox="0 0 16 16" fill="none" stroke="#3a76cf" stroke-width="1.15" stroke-linecap="round" stroke-linejoin="round" style="position:static;margin-right:3px;flex:none"><path d="M8 1 L11 6 H5 Z"/><circle cx="4" cy="11.5" r="3"/><rect x="8.5" y="8.5" width="6" height="6" rx="1"/></svg><span style="position:relative;top:0px">U<u>n</u>.Fornecedor</span></div></div>
<div class="bt" style="left:432px;top:555px;width:108px;height:22px;"><div class="bc" style=""><svg width="17" height="17" viewBox="0 0 16 16" fill="none" stroke="#3a76cf" stroke-width="1.15" stroke-linecap="round" stroke-linejoin="round" style="position:static;margin-right:3px;flex:none"><path d="M3 1.5 H9.5 L13 5 V14.5 H3 Z"/><path d="M9.5 1.5 V5 H13"/></svg><span style="position:relative;top:0px"><u>O</u>bservações</span></div></div>
<div class="bt" style="left:540px;top:555px;width:108px;height:22px;"><div class="bc" style=""><svg width="17" height="17" viewBox="0 0 16 16" fill="none" stroke="#3a76cf" stroke-width="1.15" stroke-linecap="round" stroke-linejoin="round" style="position:static;margin-right:3px;flex:none"><path d="M2 1.5 L14.5 14 H2 Z"/><path d="M4.5 9 L7 11.5 H4.5 Z"/><path d="M2 5 H3.5 M2 8 H3 M5 14 V12.5 M8 14 V13"/></svg><span style="position:relative;top:0px">Di<u>m</u>ensões</span></div></div>
<div class="bt" style="left:648px;top:555px;width:108px;height:22px;"><div class="bc" style=""><svg width="17" height="17" viewBox="0 0 16 16" fill="none" stroke="#3a76cf" stroke-width="1.15" stroke-linecap="round" stroke-linejoin="round" style="position:static;margin-right:3px;flex:none"><path d="M5 1.5 H10.5 L14 5 V14.5 H5 V11"/><path d="M10.5 1.5 V5 H14"/><path d="M1 8 H9 M6.5 5.5 L9 8 L6.5 10.5"/></svg><span style="position:relative;top:0px"><u>I</u>mportação</span></div></div>
<div class="bt" style="left:756px;top:555px;width:108px;height:22px;"><div class="bc" style=""><svg width="17" height="17" viewBox="0 0 16 16" fill="none" stroke="#3a76cf" stroke-width="1.15" stroke-linecap="round" stroke-linejoin="round" style="position:static;margin-right:3px;flex:none"><path d="M1.5 14.5 V1.5 H4 V4 L7.5 2 L10 6 L14.5 3.5 V14.5 Z"/></svg><span style="position:relative;top:0px">Dados p/<u>p</u>rod.</span></div></div>
<div class="bt" style="left:864px;top:555px;width:108px;height:22px;"><div class="bc" style=""><svg width="17" height="17" viewBox="0 0 16 16" fill="none" stroke="#3a76cf" stroke-width="1.15" stroke-linecap="round" stroke-linejoin="round" style="position:static;margin-right:3px;flex:none"><path d="M13 7.5 L7.5 13 A3.5 3.5 0 0 1 2.5 8 L8.5 2 A2.3 2.3 0 0 1 11.8 5.3 L5.8 11.3 A1.1 1.1 0 0 1 4.2 9.7 L9.5 4.5"/></svg><span style="position:relative;top:0px">Ane<u>x</u>os</span></div></div>
<div style="left:207px;top:588px;width:1017px;height:1px;background:#e0e0e0"></div>
<div class="bt" style="left:216px;top:599px;width:108px;height:22px;"><div class="bc" style=""><svg width="17" height="17" viewBox="0 0 16 16" fill="none" stroke="#3a76cf" stroke-width="1.15" stroke-linecap="round" stroke-linejoin="round" style="position:static;margin-right:3px;flex:none"><path d="M8 1 L11 2.5 V5.5 L8 7 L5 5.5 V2.5 Z M5 2.5 L8 4 L11 2.5 M8 4 V7"/><path d="M4.5 8 L7.5 9.5 V12.5 L4.5 14 L1.5 12.5 V9.5 Z M1.5 9.5 L4.5 11 L7.5 9.5 M4.5 11 V14"/><path d="M11.5 8 L14.5 9.5 V12.5 L11.5 14 L8.5 12.5 V9.5 Z M8.5 9.5 L11.5 11 L14.5 9.5 M11.5 11 V14"/></svg><span style="position:relative;top:0px">F7-Itens</span></div></div>
<div class="bt" style="left:324px;top:599px;width:108px;height:22px;"><div class="bc" style=""><svg width="17" height="17" viewBox="0 0 16 16" fill="none" stroke="#3a76cf" stroke-width="1.15" stroke-linecap="round" stroke-linejoin="round" style="position:static;margin-right:3px;flex:none"><path d="M9 14.5 H2.5 V1.5 H8 L11.5 5 V8"/><path d="M8 1.5 V5 H11.5"/><circle cx="11.5" cy="11.5" r="3.3"/><path d="M10 11.5 L11.2 12.7 L13 10.5"/></svg><span style="position:relative;top:0px">Ent<u>r</u>egas</span></div></div>
<div class="bt" style="left:432px;top:599px;width:95px;height:22px;"><div class="bc" style=""><svg width="17" height="17" viewBox="0 0 16 16" fill="none" stroke="#3a76cf" stroke-width="1.15" stroke-linecap="round" stroke-linejoin="round" style="position:static;margin-right:3px;flex:none"><path d="M3 1.5 H9.5 L13 5 V14.5 H3 Z"/><path d="M9.5 1.5 V5 H13 M5 4 H7.5 M5 6.5 H7.5"/><text x="8" y="13.5" font-size="7" font-family="Liberation Sans" text-anchor="middle" fill="#3a76cf" stroke="none">$</text></svg><span style="position:relative;top:0px">Co<u>t</u>ações</span></div></div>
<div class="bt" style="left:528px;top:599px;width:13px;height:22px"></div>
<svg style="left:531px;top:607px;" width="7" height="5" viewBox="0 0 7 5" fill="none" stroke="#9ab4dc" stroke-width="0.8" stroke-linecap="round" stroke-linejoin="round"><path d="M1.5 1.5 L3.5 3.5 L5.5 1.5 Z" fill="#9ab4dc"/></svg>
<div class="bt" style="left:540px;top:599px;width:108px;height:22px;"><div class="bc" style=""><svg width="17" height="17" viewBox="0 0 16 16" fill="none" stroke="#3a76cf" stroke-width="1.15" stroke-linecap="round" stroke-linejoin="round" style="position:static;margin-right:3px;flex:none"><path d="M3 1.5 H9.5 L13 5 V14.5 H3 Z"/><path d="M9.5 1.5 V5 H13 M5 4 H7.5 M5 6.5 H7.5"/><text x="8" y="13.5" font-size="7" font-family="Liberation Sans" text-anchor="middle" fill="#3a76cf" stroke="none">$</text></svg><span style="position:relative;top:0px">Sa<u>l</u>do planej.</span></div></div>
<div class="bt" style="left:648px;top:599px;width:108px;height:22px;"><div class="bc" style=""><svg width="17" height="17" viewBox="0 0 16 16" fill="none" stroke="#3a76cf" stroke-width="1.15" stroke-linecap="round" stroke-linejoin="round" style="position:static;margin-right:3px;flex:none"><rect x="1.5" y="1.5" width="13" height="13" rx="2"/><path d="M1.5 5.5 H14.5 M8 1.5 V5.5"/></svg><span style="position:relative;top:0px">Estoq<u>u</u>e</span></div></div>
<div class="bt" style="left:1008px;top:599px;width:99px;height:40px;"><div class="bc" style="font-size:11px;padding-left:1px;padding-top:2px;letter-spacing:-.2px"><svg width="15" height="15" viewBox="0 0 16 16" fill="none" stroke="#3a76cf" stroke-width="1.1" stroke-linecap="round" stroke-linejoin="round" style="position:static;margin-right:3px;flex:none"><path d="M1.5 1.5 L14.5 14.5 M14.5 1.5 L1.5 14.5"/></svg><span style="position:relative;top:0px">Cancelar</span></div></div>
<div class="bt" style="left:1116px;top:599px;width:99px;height:40px;background:#1b6bdb;border-color:#2a62b8;border-radius:2px"><div style="position:absolute;left:0;top:5px;width:76px;text-align:center;font-size:11.5px;line-height:14px;color:#fff"><u>A</u>vançar<br>(page down)</div></div>
<svg style="left:1193px;top:611px;" width="10" height="16" viewBox="0 0 10 16" fill="none" stroke="#fff" stroke-width="1.2" stroke-linecap="round" stroke-linejoin="round"><path d="M2 1 L8 8 L2 15"/></svg>
</body></html>
